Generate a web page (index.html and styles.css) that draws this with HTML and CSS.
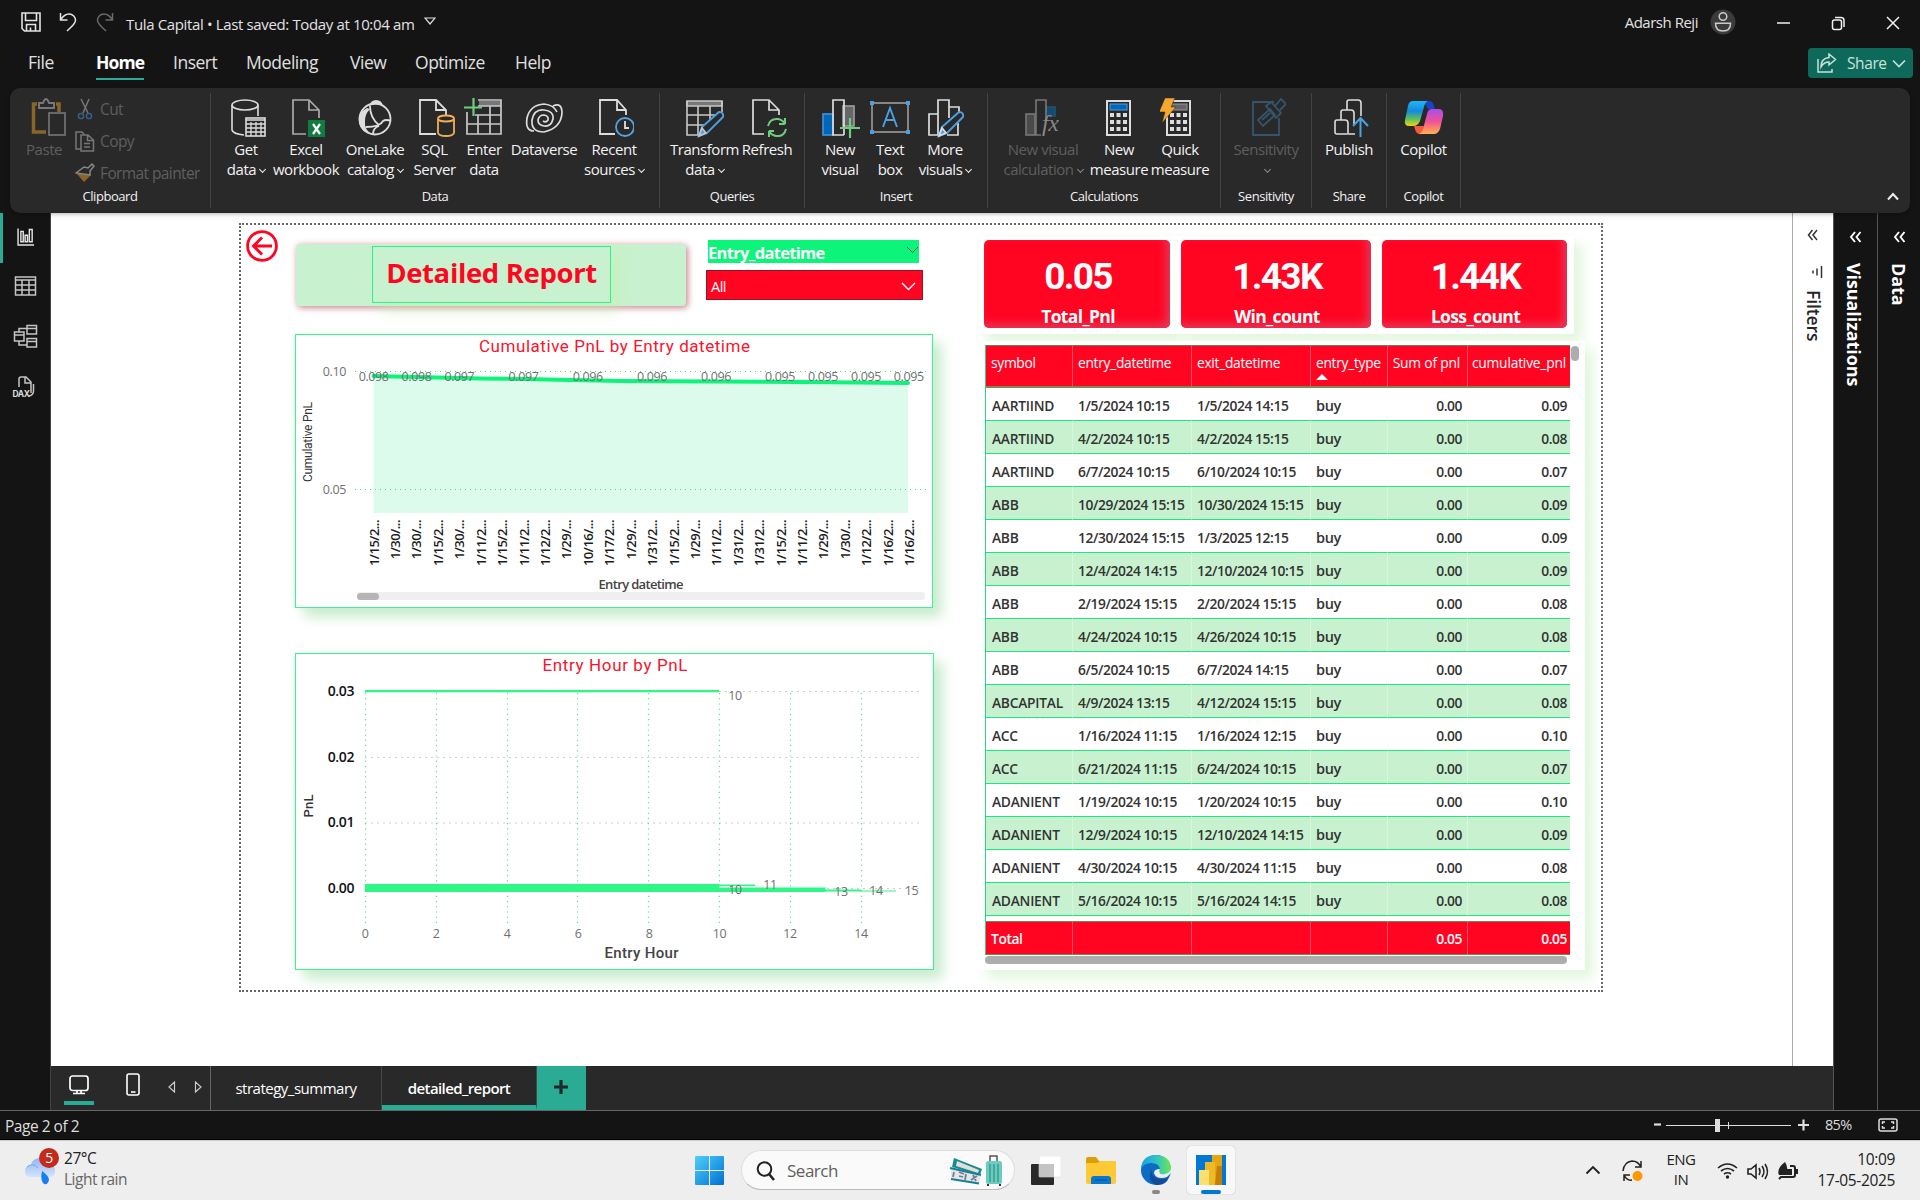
FILE: index.html
```html
<!DOCTYPE html>
<html lang="en">
<head>
<meta charset="utf-8">
<title>Tula Capital</title>
<link rel="stylesheet" href="styles.css">
</head>
<body>
<div class="app">
  <header class="titlebar">
    <svg class="ic-save" width="20" height="20" viewBox="0 0 20 20" fill="none" stroke="#e4e4e4" stroke-width="1.6"><path d="M1 1H19V19H3.500L1 16.500ZM4.500 1V8.500H15.500V1M5.500 19V12.500H14.500V19M9.500 19V15.500"/></svg>
    <svg class="ic-undo" width="18" height="20" viewBox="0 0 18 20" fill="none" stroke="#e4e4e4" stroke-width="1.500"><path d="M1.500 1V8H8.500M1.500 8C4 4 7 2 10 2C14 2 16.500 5 16.500 8.500C16.500 11.500 13.500 14 8 19"/></svg>
    <svg class="ic-redo" width="18" height="20" viewBox="0 0 18 20" fill="none" stroke="#6a6a6a" stroke-width="1.500"><path d="M16.500 1V8H9.500M16.500 8C14 4 11 2 8 2C4 2 1.500 5 1.500 8.500C1.500 11.500 4.500 14 10 19"/></svg>
    <span class="doc-title">Tula Capital • Last saved: Today at 10:04 am</span>
    <svg class="ic-tri" width="12" height="9" viewBox="0 0 12 9" fill="none" stroke="#ddd" stroke-width="1.2"><path d="M1 1H11L6 7Z"/></svg>
    <span class="user">Adarsh Reji</span>
    <svg class="avatar" width="26" height="26" viewBox="0 0 26 26" fill="none" stroke="#ccc" stroke-width="1.500"><circle cx="13" cy="13" r="12.500" fill="#3b3b3b" stroke="none"/><circle cx="13" cy="7.500" r="3.800"/><path d="M5.500 14.200H20.500C20.500 20 17.500 22 13 22C8.500 22 5.500 20 5.500 14.200Z"/></svg>
    <svg class="ic-win" width="124" height="16" viewBox="0 0 124 16" fill="none" stroke="#f0f0f0" stroke-width="1.500"><path d="M0 8H13M110 2L122 14M122 2L110 14M58 2.500H64Q67 2.500 67 5.500V12"/><rect x="55.500" y="5" width="9" height="9.500" rx="2"/></svg>
  </header>
  <nav class="menubar">
    <span class="m-file">File</span><span class="m-home">Home</span><span class="m-insert">Insert</span><span class="m-model">Modeling</span><span class="m-view">View</span><span class="m-opt">Optimize</span><span class="m-help">Help</span>
    <button class="share"><svg width="20" height="20" viewBox="0 0 20 20" fill="none" stroke="#c9e2dc" stroke-width="1.500"><path d="M1 6V19H15V16M12 1L18.500 6.500L12 12V9C8 9 6 10.500 4 14C4 8 7 5 12 4.500Z"/></svg><span>Share</span><svg width="14" height="9" viewBox="0 0 14 9" fill="none" stroke="#c9e2dc" stroke-width="1.600"><path d="M1 1.500L7 7.500L13 1.500"/></svg></button>
  </nav>

  <section class="ribbon">
    <div class="group g-clip">
      <div class="tools">
        <div class="tool t-paste dim"><svg width="36" height="40" viewBox="0 0 36 40" fill="none"><path d="M6 6H2.500V34H15M25 6H28V14" stroke="#8b6428" stroke-width="3.500"/><path d="M8 10V5H12Q15 -3 18 5H23V10Z" stroke="#777" stroke-width="2"/><rect x="18" y="15" width="16" height="22" fill="#292929" stroke="#777" stroke-width="1.600"/></svg><span>Paste</span></div>
        <div class="cliplist dim">
          <div><svg width="20" height="22" viewBox="0 0 20 22" fill="none" stroke="#777" stroke-width="1.500"><path d="M6 1L13 15M14 1L8 15"/><g stroke="#375f86"><circle cx="6" cy="18" r="2.600"/><circle cx="14" cy="18" r="2.600"/></g></svg>Cut</div>
          <div><svg width="20" height="21" viewBox="0 0 20 21" fill="none" stroke="#777" stroke-width="1.500"><path d="M6 18H1V1H7L9 3M6 4H13L18.500 9V20H6ZM12.500 4V9.500H18M9 12.500H15M9 16H15"/></svg>Copy</div>
          <div><svg width="20" height="20" viewBox="0 0 20 20"><path d="M2 11L10 5L16 12L9 19Z" fill="#8b6428"/><path d="M1 10L9 4L13 5L17 1L19 3L15 8L15 12Z" fill="#292929" stroke="#888" stroke-width="1.500"/></svg>Format painter</div>
        </div>
      </div>
      <div class="glabel">Clipboard</div>
    </div>
    <div class="group g-data">
      <div class="tools">
        <div class="tool w60"><svg width="40" height="40" viewBox="0 0 40 40" fill="none" stroke="#ddd" stroke-width="1.600"><ellipse cx="19" cy="7" rx="13" ry="5"/><path d="M6 7V32Q7 36 18 37M32 7V18"/><rect x="20" y="20" width="19" height="18" fill="#292929"/><path d="M20 22H39M20 26H39M20 30H39M20 34H39M25 24V38M30 24V38M35 24V38" stroke-width="1.300"/></svg><span>Get<br>data<i class="cv"></i></span></div>
        <div class="tool w60"><svg width="40" height="40" viewBox="0 0 40 40" fill="none" stroke="#ababab" stroke-width="1.700"><path d="M20 36H7V2H23L33 12V20M23 2V12H33"/><rect x="22" y="22" width="17" height="17" fill="#107c41" stroke="none"/><path d="M27 26L34 36M34 26L27 36" stroke="#fff" stroke-width="2.200"/></svg><span>Excel<br>workbook</span></div>
        <div class="tool w78"><svg width="40" height="40" viewBox="0 0 40 40" fill="none" stroke="#ddd" stroke-width="1.800"><circle cx="20" cy="21" r="15.500"/><path d="M14 8Q16 2 21 2Q27 2 28 8Q21 5 14 8ZM12 10Q2 15 4 25Q6 35 17 36Q9 32 10 23Q10 16 15 11Z" fill="#ddd" stroke="none"/><path d="M15 8Q15 20 24 27M11 29Q25 29 28 23Q31 21 36 23M18 36Q18 30 24 28"/></svg><span>OneLake<br>catalog<i class="cv"></i></span></div>
        <div class="tool w41"><svg width="40" height="40" viewBox="0 0 40 40" fill="none" stroke="#ddd" stroke-width="1.800"><path d="M21 36H5V2H21L31 12V17M21 2V12H31"/><g stroke="#f2ad55"><ellipse cx="31" cy="20.500" rx="8" ry="3"/><path d="M23 20.500V35Q24 38 31 38Q38 38 39 35V20.500"/></g></svg><span>SQL<br>Server</span></div>
        <div class="tool w58"><svg width="40" height="40" viewBox="0 0 40 40" fill="none" stroke="#c8c8c8" stroke-width="1.700"><path d="M15 3H37V8H15Z" fill="#777" stroke="none"/><path d="M14 2H37V36H3V14M11 17H37M3 26H37M14 17V36M26 8V36M14 8H37"/><path d="M9.500 0V18M0 9.500H18" stroke="#6fce7d" stroke-width="2.200"/></svg><span>Enter<br>data</span></div>
        <div class="tool w62"><svg width="40" height="40" viewBox="0 0 40 40" fill="none" stroke="#ddd" stroke-width="1.700"><path d="M20 34Q7 34 8 22Q10 11 20 12Q30 13 29 21Q27 29 20 28Q14 27 14 22Q15 17 20 17Q25 18 24 22Q22 25 19 23"/><path d="M29 8Q38 4 38 15Q37 30 20 34M10 33Q1 33 3 20Q6 7 20 6Q30 7 33 14"/></svg><span>Dataverse</span></div>
        <div class="tool w78"><svg width="40" height="40" viewBox="0 0 40 40" fill="none" stroke="#ddd" stroke-width="1.800"><path d="M21 36H6V2H23L32 12V17M23 2V12H32"/><g stroke="#56a3dd"><circle cx="31" cy="29" r="9"/><path d="M31 23V30H35" stroke="#ddd"/></g></svg><span>Recent<br>sources<i class="cv"></i></span></div>
      </div>
      <div class="glabel">Data</div>
    </div>
    <div class="group g-query">
      <div class="tools">
        <div class="tool w75"><svg width="40" height="40" viewBox="0 0 40 40" fill="none" stroke="#c8c8c8" stroke-width="1.600"><path d="M2 3H37V8H2Z" fill="#777"/><path d="M2 3V37H15M37 3V14M2 17H30M2 27H20M13 8V37M25 8V22"/><path d="M14 38L17 29L34 14Q39 14 38 19L22 35Z" fill="#292929" stroke="#4ca0e0" stroke-width="2"/><path d="M14 38L17 30L21 35Z" fill="#4ca0e0"/></svg><span>Transform<br>data<i class="cv"></i></span></div>
        <div class="tool w50"><svg width="40" height="40" viewBox="0 0 40 40" fill="none" stroke="#ddd" stroke-width="1.700"><path d="M17 36H6V2H22L32 12V17M22 2V12H32"/><path d="M21 28Q23 20 31 21Q36 22 38 26V20M38 26H32M39 31Q37 39 29 38Q24 37 22 33V39M22 33H27" stroke="#6fce7d" stroke-width="2"/></svg><span>Refresh</span></div>
      </div>
      <div class="glabel">Queries</div>
    </div>
    <div class="group g-ins">
      <div class="tools">
        <div class="tool w50"><svg width="40" height="40" viewBox="0 0 40 40" fill="none" stroke="#ddd" stroke-width="1.700"><rect x="23" y="8" width="11" height="20" fill="#666" stroke="#999"/><rect x="3" y="16" width="10" height="21" fill="#0067b8" stroke="#3c91d4"/><path d="M24 37H13V2H24V37"/><path d="M30 20V40M20 30H40" stroke="#6fce7d" stroke-width="2.200"/></svg><span>New<br>visual</span></div>
        <div class="tool w50"><svg width="40" height="40" viewBox="0 0 40 40" fill="none" stroke="#a5a5a5" stroke-width="1.500"><rect x="2" y="5" width="36" height="29"/><path d="M13 29L20 10L27 29M15.500 22H24.500" stroke="#4ca0e0" stroke-width="1.900"/><path d="M0 3H4V7H0ZM36 3H40V7H36ZM0 32H4V36H0ZM36 32H40V36H36Z" fill="#4ca0e0" stroke="none"/></svg><span>Text<br>box</span></div>
        <div class="tool w60"><svg width="40" height="40" viewBox="0 0 40 40" fill="none" stroke="#ddd" stroke-width="1.700"><path d="M13 37H4V16H13ZM13 16V2H24V20M24 9H34V14M33 25V37H22"/><path d="M14 38L17 29L34 14Q39 14 38 19L22 35Z" fill="#292929" stroke="#4ca0e0" stroke-width="2"/><path d="M14 38L17 30L21 35Z" fill="#4ca0e0"/></svg><span>More<br>visuals<i class="cv"></i></span></div>
      </div>
      <div class="glabel">Insert</div>
    </div>
    <div class="group g-calc">
      <div class="tools">
        <div class="tool w86 dim"><svg width="40" height="40" viewBox="0 0 40 40" fill="none" stroke="#777" stroke-width="1.600"><rect x="3" y="16" width="9" height="21" fill="#4a4a4a"/><rect x="23" y="9" width="9" height="9" fill="#124b75" stroke="#28506f"/><path d="M23 22V2H13V37H18"/><text x="19" y="33" font-family="Liberation Serif" font-style="italic" font-size="24" fill="#888" stroke="none">fx</text></svg><span>New visual<br>calculation<i class="cv"></i></span></div>
        <div class="tool w66"><svg width="40" height="40" viewBox="0 0 40 40"><rect x="8" y="3" width="23" height="34" fill="none" stroke="#ddd" stroke-width="2"/><rect x="11" y="6" width="17" height="6" fill="#0067b8" stroke="#4ca0e0"/><path d="M11 17H28M11 24H28M11 31H28" stroke="#ddd" stroke-width="4" stroke-dasharray="4 2.500"/></svg><span>New<br>measure</span></div>
        <div class="tool w56"><svg width="40" height="40" viewBox="0 0 40 40"><rect x="7" y="3" width="23" height="34" fill="none" stroke="#ddd" stroke-width="2"/><rect x="11" y="6" width="16" height="6" fill="#666" stroke="#999"/><path d="M10 17H27M10 24H27M10 31H27" stroke="#ddd" stroke-width="4" stroke-dasharray="4 2.500"/><path d="M5 0H15L11 9H16L2 25L5 14H-1Z" fill="#f5a72e" stroke="#292929" stroke-width=".5"/></svg><span>Quick<br>measure</span></div>
      </div>
      <div class="glabel">Calculations</div>
    </div>
    <div class="group g-sens"><div class="tools"><div class="tool dim"><svg width="40" height="40" viewBox="0 0 40 40" fill="none" stroke="#34556b" stroke-width="1.800"><path d="M28 4H7V37H33V20"/><path d="M12 22L24 11L29 17L17 28ZM16 22L24 15M20 8L30 20L35 15L25 4ZM29 8L35 1L40 6L34 12"/></svg><span>Sensitivity<br><i class="cv"></i></span></div></div><div class="glabel">Sensitivity</div></div>
    <div class="group g-pub"><div class="tools"><div class="tool"><svg width="40" height="40" viewBox="0 0 40 40" fill="none" stroke="#ddd" stroke-width="1.600"><path d="M18 36H8Q6 36 6 34V24Q6 22 8 22H16Q19 22 19 25V36H26M12 22V14Q12 12 14 12H22Q25 12 25 15V26M18 12V4Q18 2 20 2H29Q32 2 32 5V18"/><path d="M31.500 39V20M24 28L31.500 20L39 28" stroke="#4ca0e0" stroke-width="2"/></svg><span>Publish</span></div></div><div class="glabel">Share</div></div>
    <div class="group g-cop"><div class="tools"><div class="tool"><svg width="40" height="40" viewBox="0 0 40 40"><defs><linearGradient id="ca" x2="0" y2="1"><stop stop-color="#23b5f5"/><stop offset=".4" stop-color="#1489e0"/><stop offset=".72" stop-color="#5cbf62"/><stop offset="1" stop-color="#f5d312"/></linearGradient><linearGradient id="cb" x2="0" y2="1"><stop stop-color="#a84df0"/><stop offset=".5" stop-color="#ef5295"/><stop offset="1" stop-color="#ffb34a"/></linearGradient></defs><path d="M19 3H25Q29 3 30 8L31 11H24Z" fill="#1644c4"/><path d="M10 28H20L18 36Q12 37 11 31Z" fill="#f45b3c"/><path d="M9 3H24Q21 4 20 9L16 23Q14 28 9 28H5Q0 28 1 22L4 8Q5 3 9 3Z" fill="url(#ca)"/><path d="M26 11H35Q40 11 39 18L36 31Q34 36 30 36H15Q18 35 19 31L23 16Q24 11 28 11Z" fill="url(#cb)"/></svg><span>Copilot</span></div></div><div class="glabel">Copilot</div></div>
    <svg class="collapse" width="12" height="9" viewBox="0 0 12 9" fill="none" stroke="#eee" stroke-width="2"><path d="M1 7.500L6 2L11 7.500"/></svg>
  </section>

  <main class="work">
    <aside class="rail">
      <svg class="on" width="51" height="50" viewBox="0 0 51 50" fill="none" stroke="#e6e6e6" stroke-width="1.500"><path d="M16 15V32.500H33M19 18H21.500V29H19ZM23.500 22H26V29H23.500ZM28 16H31V29H28Z"/></svg>
      <svg width="51" height="50" viewBox="0 0 51 50" fill="none" stroke="#c4c4c4" stroke-width="1.500"><path d="M15.500 14H35.500V32H15.500ZM15.500 17H35.500M15.500 22H35.500M15.500 27H35.500M22 17V32M29 17V32"/></svg>
      <svg width="51" height="50" viewBox="0 0 51 50" fill="none" stroke="#c4c4c4" stroke-width="1.500"><path d="M14.500 19H24V28H14.500ZM14.500 22H24M27 12.500H36.500V21H27ZM27 15.500H36.500M27 25.500H36.500V34H27ZM27 28.500H36.500M19 19V15.500H27M19 28V32H27"/></svg>
      <svg width="51" height="50" viewBox="0 0 51 50" fill="none" stroke="#c4c4c4" stroke-width="1.500"><path d="M19 24V16Q19 14 21 14H26L31 19V30M25 14V20H31M33.500 21V28Q33.500 32 29 33"/><text x="12.500" y="33.500" font-family="Inter" font-weight="700" font-size="8.500" fill="#ddd" stroke="none">DAX</text></svg>
    </aside>

    <div class="center">
      <div class="stage">
        <div class="page">
          <svg class="visual back" width="32" height="32" viewBox="0 0 32 32" fill="none" stroke="#ff0522" stroke-width="2.800"><circle cx="16" cy="16" r="14.400"/><path d="M26 16H8M16 7.500L7.500 16L16 24.500" stroke-width="3"/></svg>
          <div class="visual banner"></div>
          <h1 class="visual heading">Detailed Report</h1>
          <div class="visual slicer">
            <div class="slicer-head"><b>Entry_datetime</b><svg width="13" height="8" viewBox="0 0 13 8" fill="none" stroke="#456"><path d="M1 1L6.500 6.500L12 1"/></svg></div>
            <div class="slicer-box"><span>All</span><svg width="15" height="9" viewBox="0 0 15 9" fill="none" stroke="#fff" stroke-width="1.400"><path d="M1 1L7.500 7.500L14 1"/></svg></div>
          </div>
          <svg class="visual chart c1" width="638" height="274" viewBox="295 334 638 274">
            <text class="ctitle" x="614.500" y="352" textLength="271">Cumulative PnL by Entry datetime</text>
            <path d="M355 371.500H926" stroke="#45dc83" stroke-dasharray="1 4" />
            <path d="M373.500 376L523 379L716 381.500L908 383V513H373.500Z" fill="#ddfbec"/>
            <path d="M355 489.500H926" stroke="#45dc83" stroke-dasharray="1 4"/>
            <path d="M373.500 376L480 378.500L523 379L620 381L716 381.500L830 382.300L908 383" fill="none" stroke="#0cf47a" stroke-width="4" stroke-linecap="round"/>
            <g class="lbl end"><text x="346" y="376">0.10</text><text x="346" y="494">0.05</text></g>
            <g class="lbl mid"><text x="373.600" y="381">0.098</text><text x="416.500" y="381">0.098</text><text x="459.400" y="381">0.097</text><text x="523.500" y="381">0.097</text><text x="587.700" y="381">0.096</text><text x="652" y="381">0.096</text><text x="716" y="381">0.096</text><text x="780" y="381">0.095</text><text x="823" y="381">0.095</text><text x="866" y="381">0.095</text><text x="908.700" y="381">0.095</text></g>
            <g class="dates" transform="rotate(-90)"><text x="-520" y="378.6">1/15/2...</text><text x="-520" y="400">1/30/...</text><text x="-520" y="421.4">1/30/...</text><text x="-520" y="442.9">1/15/2...</text><text x="-520" y="464.3">1/30/...</text><text x="-520" y="485.7">1/11/2...</text><text x="-520" y="507.1">1/15/2...</text><text x="-520" y="528.5">1/11/2...</text><text x="-520" y="550">1/12/2...</text><text x="-520" y="571.4">1/29/...</text><text x="-520" y="592.8">10/16/...</text><text x="-520" y="614.2">1/17/2...</text><text x="-520" y="635.6">1/29/...</text><text x="-520" y="657.1">1/31/2...</text><text x="-520" y="678.5">1/15/2...</text><text x="-520" y="699.9">1/29/...</text><text x="-520" y="721.3">1/11/2...</text><text x="-520" y="742.7">1/31/2...</text><text x="-520" y="764.2">1/31/2...</text><text x="-520" y="785.6">1/15/2...</text><text x="-520" y="807">1/11/2...</text><text x="-520" y="828.4">1/29/...</text><text x="-520" y="849.8">1/30/...</text><text x="-520" y="871.3">1/12/2...</text><text x="-520" y="892.7">1/16/2...</text><text x="-520" y="914.1">1/16/2...</text></g>
            <g transform="rotate(-90)"><text class="ytitle" x="-442" y="312" textLength="80">Cumulative PnL</text></g>
            <text class="xt1" x="641" y="589" textLength="85">Entry datetime</text>
            <rect x="357" y="592" width="568" height="8" rx="3" fill="#efefef"/><rect x="357" y="593" width="22" height="7" rx="3.500" fill="#b5b5b5"/>
          </svg>
          <svg class="visual chart c2" width="639" height="317" viewBox="295 653 639 317">
            <text class="ctitle" x="615" y="671" textLength="145">Entry Hour by PnL</text>
            <path d="M365 691.500H919M365 757.500H919M365 823H919M365 888.500H919" stroke="#cfcfcf" stroke-dasharray="2 4"/>
            <path d="M365.500 693V923M436.500 693V923M507.500 693V923M577.500 693V923M648.500 693V923M719.500 693V923M790.500 693V923M861.500 693V923" stroke="#50e888" stroke-width="1.200" stroke-dasharray="1.200 4"/>
            <path fill="#2ef787" d="M365 690H719V692.200H365ZM365 884H719V892H365ZM719 884.500H755V886H719ZM719 887.500H825.500V892H719ZM825.500 889.500H861V891H825.500ZM825.500 890.400H896V891.600H825.500Z"/>
            <g class="ylbl"><text x="354" y="696">0.03</text><text x="354" y="762">0.02</text><text x="354" y="827">0.01</text><text x="354" y="893">0.00</text></g>
            <g class="lbl mid"><text x="365" y="938">0</text><text x="436" y="938">2</text><text x="507" y="938">4</text><text x="578" y="938">6</text><text x="649" y="938">8</text><text x="719.500" y="938">10</text><text x="790" y="938">12</text><text x="861" y="938">14</text><text x="735" y="700">10</text><text x="735" y="894">10</text><text x="770" y="889">11</text><text x="841" y="896">13</text><text x="876" y="895">14</text><text x="911.500" y="895">15</text></g>
            <g transform="rotate(-90)"><text class="ytitle big" x="-806" y="313" textLength="23">PnL</text></g>
            <text class="xt2" x="641.500" y="958" textLength="74">Entry Hour</text>
          </svg>
          <div class="visual kpi k1"><div><b>0.05</b><span>Total_Pnl</span></div></div>
          <div class="visual kpi k2"><div><b>1.43K</b><span>Win_count</span></div></div>
          <div class="visual kpi k3"><div><b>1.44K</b><span>Loss_count</span></div></div>
          <div class="visual tablebox">
            <table>
              <colgroup><col class="a"><col class="b"><col class="b"><col class="c"><col class="d"><col class="e"></colgroup>
              <thead><tr><th>symbol</th><th>entry_datetime</th><th>exit_datetime</th><th>entry_type<i class="sort"></i></th><th class="n">Sum of pnl</th><th class="n">cumulative_pnl</th></tr></thead>
              <tbody>
                <tr><td>AARTIIND</td><td>1/5/2024 10:15</td><td>1/5/2024 14:15</td><td>buy</td><td>0.00</td><td>0.09</td></tr>
                <tr><td>AARTIIND</td><td>4/2/2024 10:15</td><td>4/2/2024 15:15</td><td>buy</td><td>0.00</td><td>0.08</td></tr>
                <tr><td>AARTIIND</td><td>6/7/2024 10:15</td><td>6/10/2024 10:15</td><td>buy</td><td>0.00</td><td>0.07</td></tr>
                <tr><td>ABB</td><td>10/29/2024 15:15</td><td>10/30/2024 15:15</td><td>buy</td><td>0.00</td><td>0.09</td></tr>
                <tr><td>ABB</td><td>12/30/2024 15:15</td><td>1/3/2025 12:15</td><td>buy</td><td>0.00</td><td>0.09</td></tr>
                <tr><td>ABB</td><td>12/4/2024 14:15</td><td>12/10/2024 10:15</td><td>buy</td><td>0.00</td><td>0.09</td></tr>
                <tr><td>ABB</td><td>2/19/2024 15:15</td><td>2/20/2024 15:15</td><td>buy</td><td>0.00</td><td>0.08</td></tr>
                <tr><td>ABB</td><td>4/24/2024 10:15</td><td>4/26/2024 10:15</td><td>buy</td><td>0.00</td><td>0.08</td></tr>
                <tr><td>ABB</td><td>6/5/2024 10:15</td><td>6/7/2024 14:15</td><td>buy</td><td>0.00</td><td>0.07</td></tr>
                <tr><td>ABCAPITAL</td><td>4/9/2024 13:15</td><td>4/12/2024 15:15</td><td>buy</td><td>0.00</td><td>0.08</td></tr>
                <tr><td>ACC</td><td>1/16/2024 11:15</td><td>1/16/2024 12:15</td><td>buy</td><td>0.00</td><td>0.10</td></tr>
                <tr><td>ACC</td><td>6/21/2024 11:15</td><td>6/24/2024 10:15</td><td>buy</td><td>0.00</td><td>0.07</td></tr>
                <tr><td>ADANIENT</td><td>1/19/2024 10:15</td><td>1/20/2024 10:15</td><td>buy</td><td>0.00</td><td>0.10</td></tr>
                <tr><td>ADANIENT</td><td>12/9/2024 10:15</td><td>12/10/2024 14:15</td><td>buy</td><td>0.00</td><td>0.09</td></tr>
                <tr><td>ADANIENT</td><td>4/30/2024 10:15</td><td>4/30/2024 11:15</td><td>buy</td><td>0.00</td><td>0.08</td></tr>
                <tr><td>ADANIENT</td><td>5/16/2024 10:15</td><td>5/16/2024 14:15</td><td>buy</td><td>0.00</td><td>0.08</td></tr>
                <tr class="cut"><td></td><td></td><td></td><td></td><td></td><td></td></tr>
              </tbody>
              <tfoot><tr><td>Total</td><td></td><td></td><td></td><td>0.05</td><td>0.05</td></tr></tfoot>
            </table>
            <div class="vbar"></div>
            <div class="hbar"></div>
          </div>
        </div>
        <aside class="filters">
          <svg width="12" height="12" viewBox="0 0 12 12" fill="none" stroke="#333" stroke-width="1.500"><path d="M5.500 1L1.500 6L5.500 11M10 1L6 6L10 11"/></svg>
          <svg class="ic-filter" width="12" height="14" viewBox="0 0 12 14" stroke="#333" stroke-width="1.500"><path d="M10.500 1V13M6 3.500V10.500M2 5.500V8.500"/></svg>
          <span>Filters</span>
        </aside>
      </div>
      <div class="tabs">
        <div class="views">
          <span class="desk"><svg width="20" height="20" viewBox="0 0 20 20" fill="none" stroke="#fff" stroke-width="1.700"><rect x="1" y="1" width="18" height="14.500" rx="2.500"/><path d="M4 18.500H16M8 16V18M12 16V18"/></svg></span>
          <svg class="phone" width="14" height="24" viewBox="0 0 14 24" fill="none" stroke="#fff" stroke-width="1.600"><rect x="1" y="1" width="12" height="21" rx="2"/><path d="M5 19H9.500"/></svg>
          <svg class="nav" width="34" height="12" viewBox="0 0 34 12" fill="none" stroke="#c9c9c9" stroke-width="1.200"><path d="M6.500 1V11L1 6ZM27.500 1V11L33 6Z"/></svg>
        </div>
        <div class="tab t1">strategy_summary</div>
        <div class="tab t2">detailed_report</div>
        <div class="add"><svg width="14" height="14" viewBox="0 0 14 14" stroke="#1d2b28" stroke-width="3.200"><path d="M7 0V14M0 7H14"/></svg></div>
      </div>
    </div>
    <aside class="pane viz"><svg width="13" height="12" viewBox="0 0 13 12" fill="none" stroke="#fff" stroke-width="1.900"><path d="M6 1L2 6L6 11M11.500 1L7.500 6L11.500 11"/></svg><span>Visualizations</span></aside>
    <aside class="pane dat"><svg width="13" height="12" viewBox="0 0 13 12" fill="none" stroke="#fff" stroke-width="1.900"><path d="M6 1L2 6L6 11M11.500 1L7.500 6L11.500 11"/></svg><span>Data</span></aside>
  </main>

  <footer class="status">
    <span>Page 2 of 2</span>
    <svg width="156" height="14" viewBox="0 0 156 14" fill="none" stroke="#ddd"><path d="M0 6.500H7" stroke-width="2.200"/><path d="M12 7.500H137M74.500 4V11"/><path d="M144 7H155M149.500 1.500V12.500" stroke-width="2.200"/><rect x="61" y="1" width="5" height="13" fill="#ddd" stroke="none"/></svg>
    <span class="pct">85%</span>
    <svg class="fit" width="20" height="14" viewBox="0 0 20 14" fill="none" stroke="#ddd" stroke-width="1.500"><rect x="1" y="1" width="18" height="12" rx="2"/><path d="M7 4H4.500V6M4.500 8V10H7M13 4H15.500V6M15.500 8V10H13"/></svg>
  </footer>

  <footer class="taskbar">
    <svg class="weather" width="36" height="38" viewBox="0 0 36 38"><defs><linearGradient id="cl" x2="0" y2="1"><stop stop-color="#8fb7f2"/><stop offset="1" stop-color="#d4e4fb"/></linearGradient></defs><path d="M6 30Q0 30 0 24Q0 19 6 18Q7 11 16 11Q25 12 25 18Q31 19 30 25Q29 30 25 30Z" fill="url(#cl)"/><path d="M2 20Q8 15 13 21" fill="none" stroke="#76a2e8"/><path d="M17 24Q24 29 24 33Q23 38 19 37Q15 34 17 24Z" fill="#1380f5"/><circle cx="24" cy="11" r="10" fill="#c42b1c"/><text x="24" y="16" text-anchor="middle" font-family="Open Sans" font-size="14" fill="#fff">5</text></svg>
    <div class="wtext"><span>27°C</span><span class="soft">Light rain</span></div>
    <svg class="start" width="30" height="30" viewBox="0 0 30 30"><defs><linearGradient id="wn" gradientUnits="userSpaceOnUse" x1="0" y1="0" x2="29" y2="29"><stop stop-color="#4fd0fb"/><stop offset="1" stop-color="#0070d2"/></linearGradient></defs><path d="M0 1Q0 0 1 0H14V14H0ZM15 0H28Q29 0 29 1V14H15ZM0 15H14V29H1Q0 29 0 28ZM15 15H29V28Q29 29 28 29H15Z" fill="url(#wn)"/></svg>
    <div class="search">
      <svg width="20" height="20" viewBox="0 0 20 20" fill="none" stroke="#222" stroke-width="2"><circle cx="8.500" cy="8" r="6.800"/><path d="M13 13L18 19" stroke-width="2.600"/></svg><span>Search</span>
      <svg class="trip" width="54" height="32" viewBox="0 0 54 32"><path d="M5 3L33 14L31 20L3 12Z" fill="#168b96"/><path d="M8 6L30 15L29 18L7 11Z" fill="#e6dcd6"/><path d="M2 13L32 20L30 29L2 24Z" fill="#e9e4e6"/><path d="M1 13L32 20M2 24L30 28.500" stroke="#138294" stroke-width="2.200"/><path d="M5 17L4 22M10 17L15 19M10 21L14 22M17 19L16 25M24 20L27 26M28 21L22 25" stroke="#6d8196" stroke-width="1.800"/><path d="M41 7V1H48V7" fill="none" stroke="#555" stroke-width="1.500"/><rect x="37" y="6" width="16" height="23" rx="2.500" fill="#6accbd"/><path d="M41 9V27M45 9V27M49 9V27" stroke="#35978d" stroke-width="1.300"/><path d="M39 29V31M51 29V31" stroke="#333" stroke-width="2"/></svg>
    </div>
    <svg class="tv" width="30" height="30" viewBox="0 0 30 30"><rect x="0" y="8" width="23" height="21" rx="1" fill="#292929"/><rect x="8" y="0" width="22" height="21" rx="1" fill="#fff" stroke="#ddd" stroke-width=".6"/><rect x="8" y="8" width="15" height="13" fill="#c4c4c4"/></svg>
    <svg class="folder" width="30" height="28" viewBox="0 0 30 28"><path d="M0 2Q0 0 2 0H10L13 4H28Q30 4 30 6V12H0Z" fill="#dba009"/><path d="M0 6H11L14 4H28Q30 4 30 6V25Q30 27 28 27H2Q0 27 0 25Z" fill="#fdc935"/><path d="M5 27V22Q5 19 8 19H22Q25 19 25 22V27Z" fill="#0b78ce"/><path d="M9 23H21" stroke="#074f95"/></svg>
    <svg class="edge" width="32" height="40" viewBox="0 0 32 40"><defs><linearGradient id="eg"><stop stop-color="#1b9fe0"/><stop offset=".5" stop-color="#2fc2c8"/><stop offset="1" stop-color="#6be851"/></linearGradient></defs><circle cx="16" cy="15" r="15" fill="#0a6cc4"/><path d="M1 14Q2 0 16 0Q31 1 31 14Q29 21 21 19Q17 18 20 14Q19 8 11 8Q4 8 1 14Z" fill="url(#eg)"/><path d="M12 14Q10 22 20 24Q26 25 29 22Q26 31 16 30Q6 25 12 14Z" fill="#104c9a"/><path d="M20 14Q14 14 14 18Q15 23 22 23Q27 23 29 20L32 17V14L31 14Q29 20 21 19Q18 17 20 14Z" fill="#eee"/><rect x="12" y="35" width="8" height="4" rx="2" fill="#888"/></svg>
    <div class="pbi"><svg width="48" height="48" viewBox="0 0 48 48"><rect x="9" y="9" width="30" height="30" fill="#0078d4"/><path d="M25 9H35V39H25Z" fill="#e8a512"/><path d="M30 20H35V39H28Z" fill="#c97c08"/><rect x="18" y="16" width="10" height="23" fill="#eebb28"/><rect x="12" y="24" width="10" height="15" fill="#fbe071"/><rect x="14" y="44" width="20" height="4" rx="2" fill="#0078d4"/></svg></div>
    <svg class="up" width="16" height="10" viewBox="0 0 16 10" fill="none" stroke="#222" stroke-width="1.900"><path d="M1.500 8.500L8 2L14.500 8.500"/></svg>
    <svg class="sync" width="22" height="24" viewBox="0 0 22 24" fill="none" stroke="#222" stroke-width="1.500"><path d="M1 12Q2 3 10 2Q16 2 19 8M19 2V8H13M2 22V16H8M2 16Q5 22 10 21"/><circle cx="15.500" cy="17" r="5" fill="#ff9800" stroke="none"/></svg>
    <div class="lang"><span>ENG</span><span>IN</span></div>
    <svg class="tray" width="82" height="20" viewBox="0 0 82 20" fill="none" stroke="#222" stroke-width="1.600"><path d="M1 7Q10.500 -1 20 7M4 10Q10.500 5 17 10M7 13Q10.500 10.500 14 13"/><circle cx="10.500" cy="16" r="1.700" fill="#222" stroke="none"/><path d="M31 8H34L39 4V17L34 13H31ZM42 7Q44 10.500 42 14M45 5Q49 10.500 45 16M48 3Q53 10.500 48 18"/><path d="M73 5H76Q78 5 78 7V14Q78 16 76 16H64L62 18M80 8V13" stroke-width="2"/><path d="M62 14Q59 8 68 1Q73 9 67 14ZM68 8H75V14H65Z" fill="#222" stroke="none"/></svg>
    <div class="clock"><span>10:09</span><span>17-05-2025</span></div>
  </footer>
</div>
</body>
</html>
```

FILE: styles.css
```css
* { box-sizing: border-box; }
body { margin: 0; width: 1920px; height: 1200px; overflow: hidden; background: #141414; font-family: "Open Sans", "Noto Sans", sans-serif; letter-spacing: -0.03em; }
svg { display: block; flex: none; }
.app { display: flex; flex-direction: column; height: 1200px; white-space: nowrap; }

.titlebar { height: 44px; display: flex; align-items: flex-start; color: #e2e2e2; font-size: 15px; line-height: 20px; }
.ic-save { margin: 12px 0 0 21px; }
.ic-undo { margin: 12px 0 0 18px; }
.ic-redo { margin: 12px 0 0 19px; }
.doc-title { margin: 14px 0 0 12px; width: 291px; letter-spacing: -0.36px; }
.ic-tri { margin: 17px 0 0 7px; }
.user { margin: 12px 0 0 auto; }
.avatar { margin: 9px 0 0 12px; }
.ic-win { margin: 15px 19px 0 41px; }

.menubar { height: 44px; display: flex; color: #e0e0e0; font-size: 17.500px; line-height: 24px; padding-top: 6px; }
.menubar > span { flex: none; height: 30px; margin-right: 29px; }
.m-file { margin-left: 28px; width: 39px; }
.m-home { width: 48px; border-bottom: 2px solid #2aab93; color: #fff; font-weight: 700; letter-spacing: -0.9px; }
.m-insert { width: 44px; }
.m-model { width: 75px; }
.m-view { width: 36px; }
.m-opt { width: 71px; }
.share { display: flex; align-items: center; width: 105px; height: 30px; margin: -2px 7px 0 auto; padding: 0 10px 0 9px; border: 0; border-radius: 4px; background: #0d6a5a; color: #c9e2dc; font: 15.500px "Open Sans", sans-serif; letter-spacing: -0.4px; }
.share span { margin: -1px 5px 0 10px; }

.ribbon { flex: none; display: flex; width: 1900px; height: 125px; margin-left: 10px; border-radius: 10px; background: #292929; color: #f2f2f2; font-size: 15px; position: relative; z-index: 2; box-shadow: 0 1px 4px rgba(0,0,0,.3); }
.group { flex: none; height: 115px; margin-top: 5px; border-right: 1px solid #434343; display: flex; flex-direction: column; justify-content: space-between; }
.tools { display: flex; height: 92px; padding-top: 5px; }
.g-clip { width: 201px; }
.g-data { width: 449px; } .g-data .tools { padding-left: 5px; }
.g-query { width: 145px; } .g-query .tools { padding-left: 7px; }
.g-ins { width: 183px; } .g-ins .tools { padding-left: 10px; }
.g-calc { width: 233px; } .g-calc .tools { padding-left: 12px; }
.g-sens { width: 91px; }
.g-pub { width: 75px; } .g-cop { width: 74px; }
.g-sens .tool, .g-pub .tool, .g-cop .tool { width: 100%; }
.tool { flex: none; display: flex; flex-direction: column; align-items: center; text-align: center; line-height: 20px; }
.tool span { margin-top: 1px; letter-spacing: -0.45px; }
.w41 { width: 41px; } .w50 { width: 50px; } .w56 { width: 56px; } .w58 { width: 58px; } .w60 { width: 60px; } .w62 { width: 62px; } .w66 { width: 66px; } .w75 { width: 75px; } .w78 { width: 78px; } .w86 { width: 86px; }
.dim { color: #5f5f5f; }
.cv { display: inline-block; width: 5px; height: 5px; margin: 0 0 3px 4px; border: solid currentColor; border-width: 0 1.500px 1.500px 0; transform: rotate(45deg); }
.dim .cv { border-color: #8a8a8a; }
.t-paste { width: 60px; padding-left: 10px; }
.t-paste span { margin-left: -2px; }
.t-paste svg { margin-left: 8px; }
.cliplist { padding: 0 0 0 5px; font-size: 15.500px; letter-spacing: -0.6px; }
.cliplist div { display: flex; align-items: center; gap: 5px; height: 32px; }
.cliplist div:first-child { height: 21px; margin-bottom: 6px; }
.glabel { height: 22px; line-height: 20px; font-size: 13px; text-align: center; letter-spacing: -0.45px; }
.collapse { margin: 104px 11px 0 auto; }

.work { flex: none; display: flex; height: 897px; }
.rail { width: 51px; border-right: 1px solid #444; }
.rail .on { border-left: 3px solid #2aab93; }
.center { width: 1782px; }
.stage { display: flex; height: 853px; background: #fff; }

/* Report page: a free canvas on which visuals are placed */
.page { flex: none; position: relative; width: 1364px; height: 769px; margin: 10px 0 0 188px; border: 2px dotted #666; }
.visual { position: absolute; }
.back { left: 5px; top: 5px; }
.banner { left: 55px; top: 19px; width: 390px; height: 62px; border-radius: 4px; background: #c8f2cf; box-shadow: 2px 2px 6px rgba(150,50,70,.5), 0 0 6px rgba(255,80,90,.2); }
.heading { left: 131px; top: 21px; width: 239px; height: 57px; margin: 0; border: 1px solid #2ef08c; box-shadow: 8px 8px 14px rgba(190,240,170,.45); color: #ff0522; font: 700 27.500px/52px "Open Sans", sans-serif; letter-spacing: -0.35px; text-align: center; }
.slicer { left: 465px; top: 15px; width: 217px; }
.slicer-head { display: flex; justify-content: space-between; width: 211px; height: 23px; margin-left: 2px; background: #0cf47a; color: #fff; font-size: 16.500px; line-height: 26px; }
.slicer-head b { letter-spacing: -0.7px; }
.slicer-head svg { margin-top: 6px; }
.slicer-box { display: flex; align-items: center; justify-content: space-between; height: 30px; margin-top: 7px; padding: 3px 6px 0 4px; border: 1px solid #8e1626; background: #ff0522; color: #fff; font-size: 14.500px; }
.chart { outline: 1px solid #3ff097; outline-offset: -1px; background: #fff; box-shadow: 9px 9px 12px #c9ecce, 0 0 6px #e4fbe9; overflow: hidden; }
.c1 { left: 54px; top: 109px; }
.c2 { left: 54px; top: 428px; }
.ctitle { font: 17px Roboto, sans-serif; fill: #f7142d; text-anchor: middle; letter-spacing: 0; }
.lbl { font-size: 12.500px; fill: #707070; letter-spacing: -0.4px; }
.mid, .xt1, .xt2 { text-anchor: middle; }
.ytitle { text-anchor: middle; font: 12px Roboto, sans-serif; fill: #333; letter-spacing: 0; }
.big { font: 500 13px Roboto, sans-serif; }
.end, .dates, .ylbl { text-anchor: end; }
.dates { font-size: 13px; font-weight: 600; fill: #1c1c1c; letter-spacing: -0.5px; }
.ylbl { font-size: 14px; font-weight: 600; fill: #111; letter-spacing: -0.4px; }
.xt1 { font-size: 13px; font-weight: 600; fill: #444; letter-spacing: 0; }
.xt2 { font: 500 15px Roboto, sans-serif; fill: #444; letter-spacing: 0; }
.kpi { top: 11px; height: 98px; padding: 4px 7px 6px 5px; background: #fff; box-shadow: 8px 8px 12px #e1f6dc, 0 0 5px #f3fcf1; }
.k1 { left: 738px; width: 198px; }
.k2 { left: 935px; width: 202px; }
.k3 { left: 1136px; width: 197px; }
.kpi div { display: flex; flex-direction: column; align-items: center; height: 88px; padding-left: 2px; border-radius: 5px; background: #ff0522; box-shadow: inset -4px -4px 8px #e4385a; color: #fff; }
.kpi b { margin-top: 13px; font: 700 37px/48px "Roboto", sans-serif; letter-spacing: -1.700px; }
.kpi span { margin-top: 4px; font-size: 17.500px; line-height: 22px; font-weight: 700; letter-spacing: -0.65px; }
.tablebox { left: 738px; top: 116px; width: 606px; height: 629px; padding: 4px 0 0 6px; background: #fff; box-shadow: 8px 8px 12px #e1f6dc; }
table { width: 585px; table-layout: fixed; border-collapse: separate; border-spacing: 0; font-size: 13.800px; font-weight: 600; color: #333; border-left: 1px solid #2bd283; }
.a { width: 86px; } .b { width: 119px; } .c { width: 77px; } .d { width: 80px; } .e { width: 103px; }
th { height: 43px; padding: 0 3px 7px 5px; background: #ff0522; color: #fff; text-align: left; font-weight: 400; font-size: 13.800px; letter-spacing: -0.3px; border-top: 1px solid #4e8e55; border-bottom: 2px solid #7e8a55; position: relative; }
th + th, td + td { border-left: 1px solid rgba(255,255,255,.3); }
th.n { padding: 0 4px 7px 3px; text-align: right; letter-spacing: -0.2px; }
th.n:nth-child(5) { padding-right: 7px; }
.sort { position: absolute; left: 5px; top: 28px; border: solid transparent; border-width: 0 6px 6px; border-bottom-color: #fff; }
td { height: 33px; padding: 3px 3px 0 5px; border-bottom: 1px solid #19ea80; letter-spacing: -0.4px; line-height: 20px; }
tbody td:first-child { padding-left: 6px; letter-spacing: -0.25px; }
tbody td:nth-child(4) { font-size: 14.500px; }
tbody tr:nth-child(even) { background: #c8f2cf; }
td:nth-child(5) { text-align: right; padding-right: 5px; }
td:nth-child(6) { text-align: right; }
tbody .cut td { height: 5px; padding: 0; border-bottom: 0; line-height: 0; font-size: 0; }
tfoot td { height: 34px; padding-top: 2px; background: #ff0522; color: #fff; border-top: 1px solid #5c9255; border-bottom: 1px solid #5c9255; font-weight: 600; }
.vbar { position: absolute; left: 592px; top: 5px; width: 8px; height: 15px; border-radius: 4px; background: #adadad; }
.hbar { width: 582px; height: 8px; margin-top: 1px; border-radius: 4px; background: #adadad; }

.filters { width: 41px; margin-left: auto; border-left: 1px solid #aaa; display: flex; flex-direction: column; align-items: center; color: #252525; }
.filters svg { margin-top: 16px; }
.filters .ic-filter { margin: 24px 0 0 8px; }
.filters span { writing-mode: vertical-rl; margin: 11px 0 0 2px; font-size: 17.500px; line-height: 24px; letter-spacing: -0.1px; font-weight: 600; }
.pane { width: 44px; border-left: 1px solid #555; display: flex; flex-direction: column; align-items: center; color: #fff; }
.pane svg { margin: 18px 0 0; }
.pane span { writing-mode: vertical-rl; margin: 20px 3px 0 0; font-size: 18px; font-weight: 700; line-height: 24px; letter-spacing: -0.1px; }
.dat { width: 43px; }
.dat span { margin-right: 0; }

.tabs { display: flex; height: 44px; background: #292929; color: #fff; font-size: 15px; }
.views { display: flex; width: 160px; border-right: 1px solid #666; }
.desk { width: 30px; height: 39px; margin-left: 13px; padding: 9px 5px 0; border-bottom: 4px solid #2aab93; }
.phone { margin: 7px 0 0 32px; }
.nav { margin: 15px 0 0 28px; }
.tab { line-height: 44px; text-align: center; border-right: 1px solid #484848; }
.t1 { width: 171px; letter-spacing: -0.5px; }
.t2 { width: 155px; border-bottom: 5px solid #2aab93; font-weight: 600; letter-spacing: -0.6px; }
.add { width: 49px; background: #2aab93; display: flex; justify-content: center; padding: 14px 1px 0 0; }

.status { flex: none; height: 30px; display: flex; align-items: center; border-top: 1px solid #666; border-bottom: 1px solid #000; padding-left: 5px; color: #ddd; font-size: 15.500px; line-height: 20px; }
.status > span:first-child { width: 1649px; padding-top: 1px; }
.status .pct { margin: -1px 25px 0 15px; width: 28px; font-size: 14.500px; letter-spacing: -0.7px; }

.taskbar { flex: none; display: flex; height: 60px; background: #eee; border-top: 1px solid #ccc; color: #222; font-size: 15.500px; line-height: 21px; }
.weather { margin: 6px 0 0 25px; }
.wtext { margin: 7px 0 0 3px; width: 100px; display: flex; flex-direction: column; }
.soft { color: #666; }
.start { margin: 15px 0 0 531px; }
.search { display: flex; flex: none; width: 274px; height: 40px; margin: 9px 0 0 16px; padding: 10px 11px 0 14px; border-radius: 20px; background: #fafafa; border: 1px solid #ddd; border-bottom-color: #bbb; font-size: 17px; color: #5e5e5e; }
.search span { margin: -1px auto 0 11px; }
.trip { margin: -6px 0 0; }
.tv { margin: 15px 0 0 16px; }
.folder { margin: 16px 0 0 25px; }
.edge { margin: 14px 0 0 24px; }
.pbi { width: 48px; height: 48px; margin: 5px 0 0 15px; border-radius: 4px; background: #f8f8f8; box-shadow: 0 0 1px #999; }
.up { margin: 24px 0 0 350px; }
.sync { margin: 18px 0 0 21px; }
.lang { display: flex; flex-direction: column; align-items: center; width: 50px; margin: 8px 0 0 12px; line-height: 20px; font-size: 15px; }
.tray { margin: 20px 0 0 11px; }
.clock { display: flex; flex-direction: column; align-items: flex-end; margin: 8px 25px 0 auto; letter-spacing: -0.35px; }
```
